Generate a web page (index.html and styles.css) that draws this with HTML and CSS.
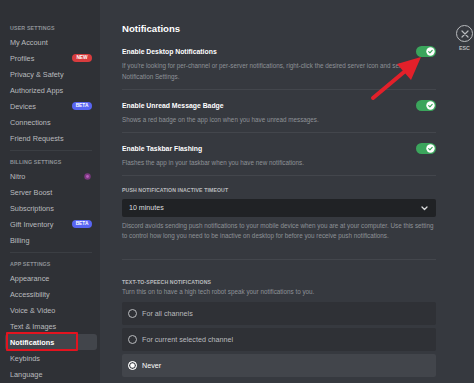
FILE: index.html
```html
<!DOCTYPE html>
<html lang="en">
<head>
    <meta charset="UTF-8">
    <title>Notifications - User Settings</title>
    <link rel="stylesheet" href="styles.css">
</head>
<body>
    <div class="app">
        <aside class="sidebar">
            <div class="side-head">User Settings</div>
            <div class="side-item">My Account</div>
            <div class="side-item">Profiles <span class="badge new">NEW</span></div>
            <div class="side-item">Privacy &amp; Safety</div>
            <div class="side-item">Authorized Apps</div>
            <div class="side-item">Devices <span class="badge beta">BETA</span></div>
            <div class="side-item">Connections</div>
            <div class="side-item">Friend Requests</div>
            <div class="side-sep"></div>

            <div class="side-head">Billing Settings</div>
            <div class="side-item">Nitro <svg class="nitro-icon" width="7" height="7" viewBox="0 0 7 7"><circle cx="3.5" cy="3.5" r="3.2" fill="#7d3982"/><circle cx="3.5" cy="3.5" r="1.4" fill="#b65fbb"/></svg></div>
            <div class="side-item">Server Boost</div>
            <div class="side-item">Subscriptions</div>
            <div class="side-item">Gift Inventory <span class="badge beta">BETA</span></div>
            <div class="side-item">Billing</div>
            <div class="side-sep"></div>

            <div class="side-head">App Settings</div>
            <div class="side-item">Appearance</div>
            <div class="side-item">Accessibility</div>
            <div class="side-item">Voice &amp; Video</div>
            <div class="side-item">Text &amp; Images</div>
            <div class="side-item selected">Notifications<span class="highlight"></span></div>
            <div class="side-item">Keybinds</div>
            <div class="side-item">Language</div>
        </aside>

        <main class="content">
            <h1 class="page-title">Notifications</h1>

            <div class="setting">
                <div class="setting-row">
                    <span class="setting-label">Enable Desktop Notifications</span>
                    <svg class="toggle" width="20" height="11" viewBox="0 0 20 11"><rect width="20" height="11" rx="5.5" fill="#3ba55c"/><circle cx="14.5" cy="5.5" r="4.2" fill="#fff"/><path d="M12.7 5.7l1.2 1.2 2.3-2.5" fill="none" stroke="#3ba55c" stroke-width="1.2" stroke-linecap="round" stroke-linejoin="round"/></svg>
                </div>
                <p class="setting-desc">If you're looking for per-channel or per-server notifications, right-click the desired server icon and select<br>Notification Settings.</p>
            </div>

            <div class="setting">
                <div class="setting-row">
                    <span class="setting-label">Enable Unread Message Badge</span>
                    <svg class="toggle" width="20" height="11" viewBox="0 0 20 11"><rect width="20" height="11" rx="5.5" fill="#3ba55c"/><circle cx="14.5" cy="5.5" r="4.2" fill="#fff"/><path d="M12.7 5.7l1.2 1.2 2.3-2.5" fill="none" stroke="#3ba55c" stroke-width="1.2" stroke-linecap="round" stroke-linejoin="round"/></svg>
                </div>
                <p class="setting-desc">Shows a red badge on the app icon when you have unread messages.</p>
            </div>

            <div class="setting">
                <div class="setting-row">
                    <span class="setting-label">Enable Taskbar Flashing</span>
                    <svg class="toggle" width="20" height="11" viewBox="0 0 20 11"><rect width="20" height="11" rx="5.5" fill="#3ba55c"/><circle cx="14.5" cy="5.5" r="4.2" fill="#fff"/><path d="M12.7 5.7l1.2 1.2 2.3-2.5" fill="none" stroke="#3ba55c" stroke-width="1.2" stroke-linecap="round" stroke-linejoin="round"/></svg>
                </div>
                <p class="setting-desc">Flashes the app in your taskbar when you have new notifications.</p>
            </div>

            <div class="section">
                <div class="section-head">Push Notification Inactive Timeout</div>
                <div class="select">
                    <span>10 minutes</span>
                    <svg width="7" height="5" viewBox="0 0 7 5"><path d="M1 1l2.5 2.5L6 1" fill="none" stroke="#dcddde" stroke-width="1.3" stroke-linecap="round" stroke-linejoin="round"/></svg>
                </div>
                <p class="section-desc">Discord avoids sending push notifications to your mobile device when you are at your computer. Use this setting<br>to control how long you need to be inactive on desktop for before you receive push notifications.</p>
            </div>

            <div class="section tts">
                <div class="section-head">Text-to-speech Notifications</div>
                <p class="section-desc">Turn this on to have a high tech robot speak your notifications to you.</p>
                <div class="radio-list">
                    <div class="radio-row"><span class="radio"></span>For all channels</div>
                    <div class="radio-row"><span class="radio"></span>For current selected channel</div>
                    <div class="radio-row checked"><span class="radio"></span>Never</div>
                </div>
            </div>
        </main>

        <div class="tools">
            <div class="close-circle">
                <svg width="8" height="8" viewBox="0 0 8 8"><path d="M1 1l6 6M7 1L1 7" stroke="#b9bbbe" stroke-width="1.2" stroke-linecap="round"/></svg>
            </div>
            <div class="close-label">ESC</div>
        </div>

        <!-- annotation arrow pointing at the first toggle -->
        <svg class="arrow" width="474" height="383" viewBox="0 0 474 383">
            <path d="M373 98L404 72" stroke="#e3202a" stroke-width="4" stroke-linecap="round"/>
            <polygon points="421,57 397,64 411,80" fill="#e3202a"/>
        </svg>
    </div>
</body>
</html>
```

FILE: styles.css
```css
* {
    margin: 0;
    padding: 0;
    box-sizing: border-box;
}

:root {
    --bg-main: #36393f;
    --bg-side: #2f3136;
    --bg-dark: #202225;
    --text-head: #ffffff;
    --text-normal: #dcddde;
    --text-muted: #b9bbbe;
    --text-faint: #8e9297;
    --line: #43464c;
    --green: #3ba55c;
}

html, body {
    width: 474px;
    height: 383px;
    overflow: hidden;
}

body {
    background: var(--bg-main);
    font-family: "Liberation Sans", Arial, sans-serif;
    color: var(--text-normal);
}

.app {
    position: relative;
    display: flex;
    height: 383px;
}

/* Sidebar */
.sidebar {
    width: 100px;
    flex: none;
    background: var(--bg-side);
}

.side-head {
    margin: 5px 0 0 10px;
    height: 12px;
    line-height: 12px;
    font-size: 5.3px;
    font-weight: 700;
    letter-spacing: 0.15px;
    text-transform: uppercase;
    color: var(--text-faint);
}

.side-head:first-child {
    margin-top: 22px;
}

.side-item {
    position: relative;
    display: flex;
    justify-content: space-between;
    align-items: center;
    height: 16px;
    margin: 0 3px 0 5px;
    padding: 0 5px;
    border-radius: 3px;
    font-size: 7.3px;
    color: var(--text-muted);
}

.side-item.selected {
    background: #42454b;
    color: #fff;
    font-weight: 700;
}

.highlight {
    position: absolute;
    left: 1px;
    top: -2px;
    width: 72px;
    height: 19px;
    border: 2px solid #e3131f;
    border-radius: 1px;
}

.side-sep {
    height: 1px;
    margin: 4px 8px 0 10px;
    background: #3b3e43;
}

.badge {
    width: 20px;
    height: 8px;
    border-radius: 4px;
    font-size: 4.8px;
    font-weight: 700;
    line-height: 8px;
    text-align: center;
    color: #fff;
}

.badge.new {
    background: #d83c3e;
}

.badge.beta {
    background: #5865f2;
}

.nitro-icon {
    display: block;
    margin-right: 1px;
}

/* Main content */
.content {
    width: 314px;
    flex: none;
    margin-left: 22px;
    padding-top: 21px;
}

.page-title {
    height: 16px;
    line-height: 16px;
    font-size: 9.6px;
    font-weight: 700;
    color: var(--text-head);
}

.setting {
    margin-top: 9px;
    padding-bottom: 7px;
    border-bottom: 1px solid var(--line);
}

.setting:first-of-type {
    margin-top: 8px;
}

.setting-row {
    display: flex;
    justify-content: space-between;
    align-items: center;
    height: 12px;
}

.setting-label {
    font-size: 6.85px;
    font-weight: 700;
    color: #fff;
}

.toggle {
    display: block;
}

.setting-desc {
    margin-top: 3px;
    font-size: 6.3px;
    line-height: 11px;
    color: var(--text-faint);
}

.section {
    margin-top: 10px;
    padding-bottom: 18px;
    border-bottom: 1px solid var(--line);
}

.section.tts {
    margin-top: 18px;
    padding-bottom: 0;
    border-bottom: none;
}

.section-head {
    height: 8px;
    line-height: 8px;
    font-size: 5.2px;
    font-weight: 700;
    letter-spacing: 0.1px;
    text-transform: uppercase;
    color: var(--text-muted);
}

.select {
    display: flex;
    justify-content: space-between;
    align-items: center;
    height: 18px;
    margin-top: 5px;
    padding: 0 8px 0 7px;
    background: var(--bg-dark);
    border-radius: 2px;
    font-size: 7.1px;
    color: var(--text-normal);
}

.section-desc {
    margin-top: 4px;
    font-size: 6.3px;
    line-height: 10px;
    color: var(--text-faint);
}

.tts .section-desc {
    margin-top: 1px;
}

.radio-list {
    display: flex;
    flex-direction: column;
    gap: 3px;
    margin-top: 5px;
}

.radio-row {
    display: flex;
    align-items: center;
    gap: 5px;
    height: 23px;
    padding-left: 6px;
    background: var(--bg-side);
    border-radius: 2px;
    font-size: 7.2px;
    color: var(--text-muted);
}

.radio {
    width: 9px;
    height: 9px;
    border: 1.5px solid var(--text-muted);
    border-radius: 50%;
}

.radio-row.checked {
    background: #42454b;
    color: #fff;
}

.radio-row.checked .radio {
    border-color: #fff;
    background: #fff;
    box-shadow: inset 0 0 0 1.2px #42454b;
}

/* ESC button */
.tools {
    margin-left: 20px;
    padding-top: 25px;
    display: flex;
    flex-direction: column;
    align-items: center;
    width: 17px;
    flex: none;
}

.close-circle {
    width: 17px;
    height: 17px;
    border: 1.3px solid var(--text-muted);
    border-radius: 50%;
    display: flex;
    align-items: center;
    justify-content: center;
}

.close-label {
    margin-top: 3px;
    font-size: 5.3px;
    font-weight: 700;
    color: var(--text-muted);
}

.arrow {
    position: absolute;
    left: 0;
    top: 0;
    pointer-events: none;
}
```
